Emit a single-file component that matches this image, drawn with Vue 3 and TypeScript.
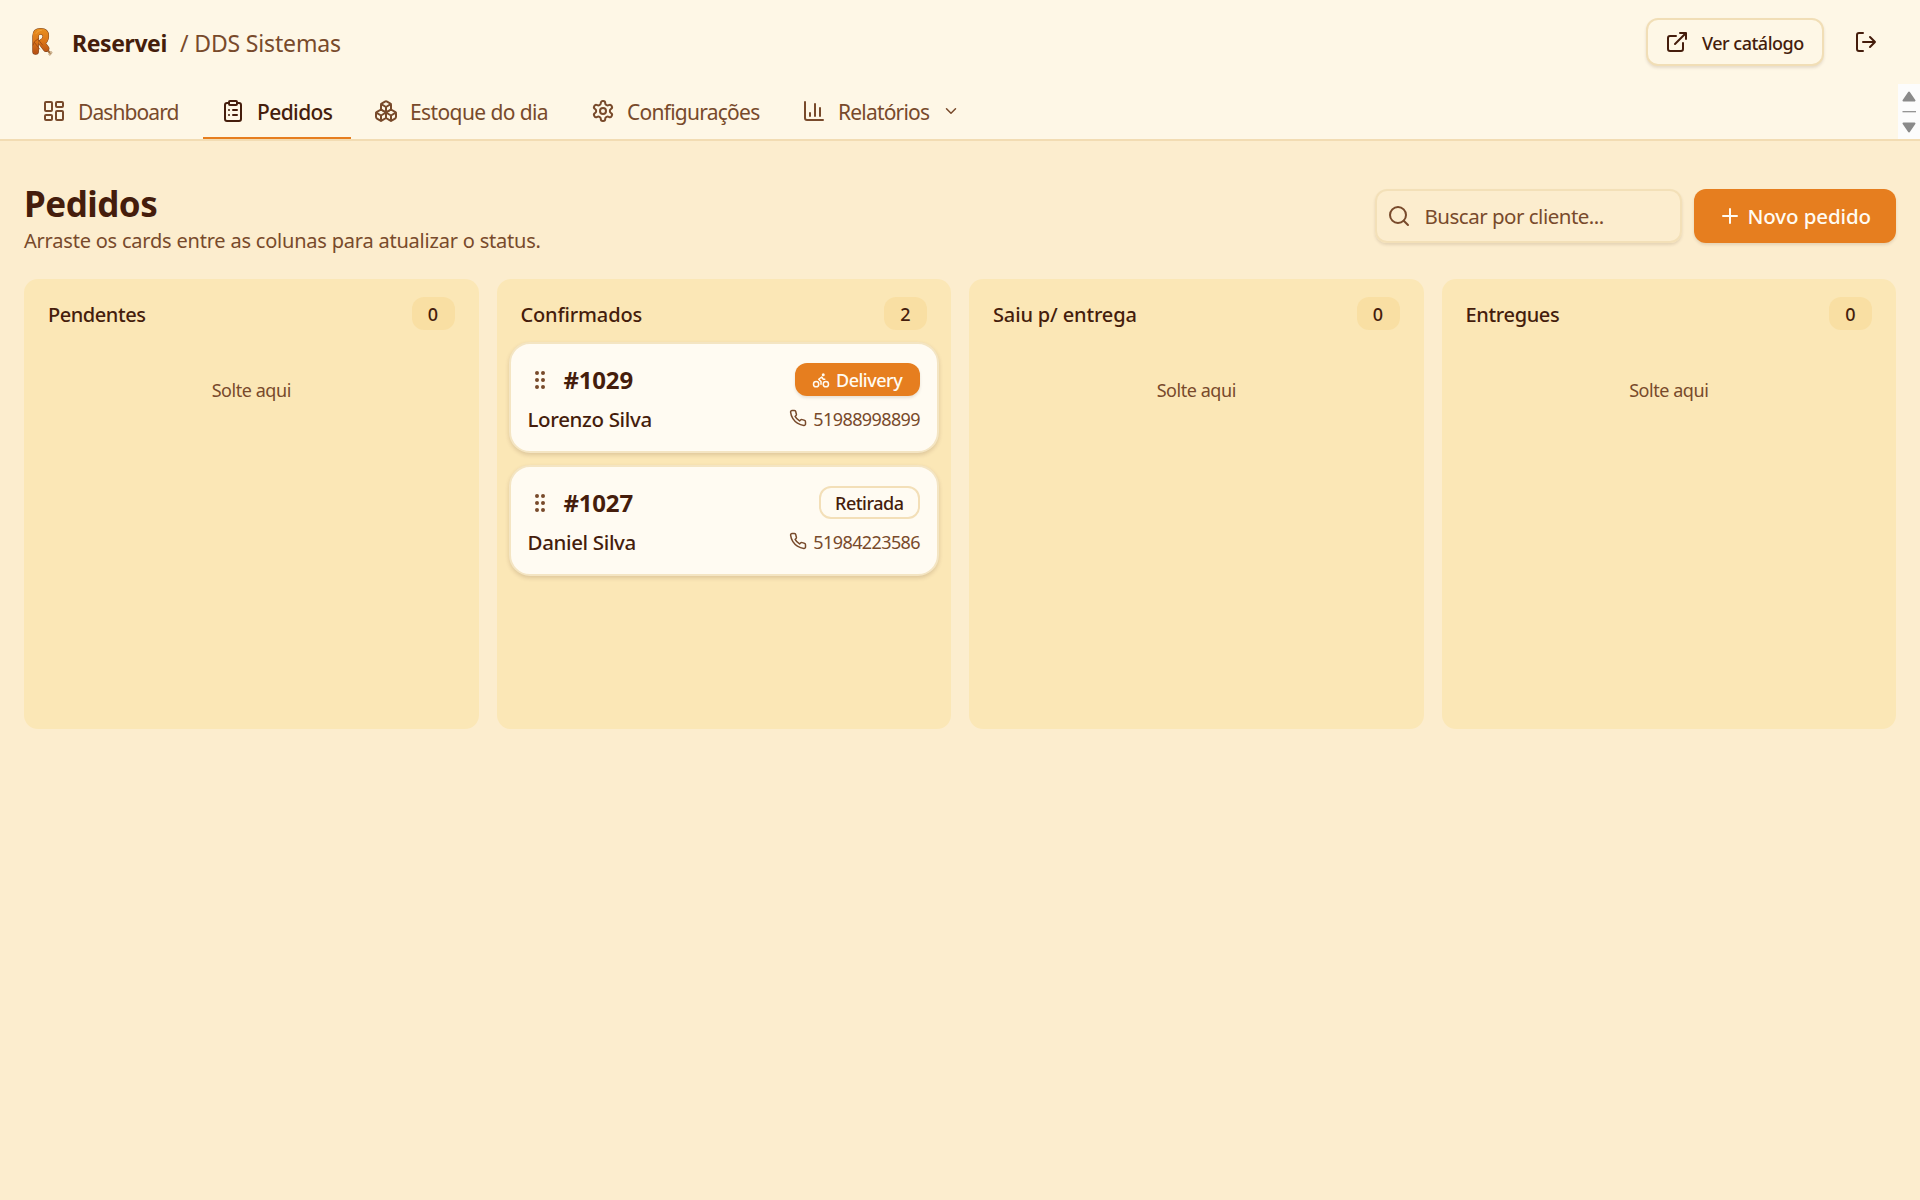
<script setup lang="ts">
interface Order {
  id: number
  customer: string
  phone: string
  delivery: boolean
}

interface Column {
  key: string
  title: string
  orders: Order[]
}

const columns: Column[] = [
  { key: 'pending', title: 'Pendentes', orders: [] },
  {
    key: 'confirmed',
    title: 'Confirmados',
    orders: [
      { id: 1029, customer: 'Lorenzo Silva', phone: '51988998899', delivery: true },
      { id: 1027, customer: 'Daniel Silva', phone: '51984223586', delivery: false },
    ],
  },
  { key: 'shipped', title: 'Saiu p/ entrega', orders: [] },
  { key: 'delivered', title: 'Entregues', orders: [] },
]
</script>

<template>
  <div class="page">
    <header class="header">
      <div class="topbar">
        <div class="brand">
          <svg class="logo" viewBox="0 0 24 30">
            <defs>
              <linearGradient id="sausage" gradientUnits="userSpaceOnUse" x1="0" y1="1" x2="0" y2="28">
                <stop offset="0" stop-color="#e8901f" />
                <stop offset="0.5" stop-color="#dc7619" />
                <stop offset="1" stop-color="#b04a12" />
              </linearGradient>
            </defs>
            <path d="M16.500 22l3.500 4" stroke="#a8703c" stroke-width="2" stroke-linecap="round" />
            <circle cx="21" cy="25.600" r="1" fill="#f3dfbd" stroke="#a07a50" stroke-width=".6" />
            <circle cx="19.800" cy="27.200" r="1" fill="#f3dfbd" stroke="#a07a50" stroke-width=".6" />
            <g fill="none" stroke-linecap="round" stroke-linejoin="round">
              <path d="M5.600 24.500V9Q5.600 4.400 10.700 4.400 15.800 4.400 15.800 9.200 15.800 13.500 11.500 15.500L16 21.500" stroke="#7c4420" stroke-width="6.600" />
              <path d="M5.600 24.500V9Q5.600 4.400 10.700 4.400 15.800 4.400 15.800 9.200 15.800 13.500 11.500 15.500L16 21.500" stroke="url(#sausage)" stroke-width="5.600" />
              <path d="M8.500 11.500Q3 14.500 3 18M4.500 15.500l5 6.500M9 13.500l3.500 4.500" stroke="#a04a12" stroke-width=".9" />
              <path d="M6 6.500Q7.500 3.200 11.500 3.200" stroke="#f0a23c" stroke-width="1" />
            </g>
          </svg>
          <span class="brand-name">Reservei</span>
          <span class="tenant">/ DDS Sistemas</span>
        </div>
        <div class="actions">
          <button class="catalog">
            <svg class="icon" viewBox="0 0 24 24"><path d="M15 3h6v6M10 14 21 3M18 13v6a2 2 0 0 1-2 2H5a2 2 0 0 1-2-2V8a2 2 0 0 1 2-2h6" /></svg>
            <span>Ver catálogo</span>
          </button>
          <button class="logout" aria-label="Sair">
            <svg class="icon" viewBox="0 0 24 24"><path d="m16 17 5-5-5-5M21 12H9M9 21H5a2 2 0 0 1-2-2V5a2 2 0 0 1 2-2h4" /></svg>
          </button>
        </div>
      </div>

      <div class="navbar">
        <nav class="tabs">
          <a class="tab">
            <svg class="icon" viewBox="0 0 24 24">
              <rect width="7" height="9" x="3" y="3" rx="1" /><rect width="7" height="5" x="14" y="3" rx="1" />
              <rect width="7" height="9" x="14" y="12" rx="1" /><rect width="7" height="5" x="3" y="16" rx="1" />
            </svg>
            <span class="t-dash">Dashboard</span>
          </a>
          <a class="tab active">
            <svg class="icon" viewBox="0 0 24 24">
              <rect width="8" height="4" x="8" y="2" rx="1" />
              <path d="M16 4h2a2 2 0 0 1 2 2v14a2 2 0 0 1-2 2H6a2 2 0 0 1-2-2V6a2 2 0 0 1 2-2h2M12 11h4M12 16h4M8 11h.01M8 16h.01" />
            </svg>
            <span class="t-ped">Pedidos</span>
          </a>
          <a class="tab">
            <svg class="icon" viewBox="0 0 24 24">
              <path d="M2.970 12.920A2 2 0 0 0 2 14.630v3.240a2 2 0 0 0 .970 1.710l3 1.800a2 2 0 0 0 2.060 0L12 19v-5.500l-5-3-4.030 2.420Z" />
              <path d="m7 16.500-4.740-2.850M7 16.500l5-3M7 16.500v5.170" />
              <path d="M12 13.500V19l3.970 2.380a2 2 0 0 0 2.060 0l3-1.800a2 2 0 0 0 .970-1.710v-3.240a2 2 0 0 0-.970-1.710L17 10.500l-5 3Z" />
              <path d="m17 16.500-5-3M17 16.500l4.740-2.850M17 16.500v5.170" />
              <path d="M7.970 4.420A2 2 0 0 0 7 6.130v4.370l5 3 5-3V6.130a2 2 0 0 0-.970-1.710l-3-1.800a2 2 0 0 0-2.060 0l-3 1.800Z" />
              <path d="M12 8 7.260 5.150M12 8l4.740-2.850M12 13.500V8" />
            </svg>
            <span class="t-est">Estoque do dia</span>
          </a>
          <a class="tab">
            <svg class="icon" viewBox="0 0 24 24">
              <path d="M12.220 2h-.440a2 2 0 0 0-2 2v.180a2 2 0 0 1-1 1.730l-.430.250a2 2 0 0 1-2 0l-.150-.080a2 2 0 0 0-2.730.730l-.220.380a2 2 0 0 0 .730 2.730l.150.100a2 2 0 0 1 1 1.720v.510a2 2 0 0 1-1 1.740l-.150.090a2 2 0 0 0-.730 2.730l.220.380a2 2 0 0 0 2.730.730l.150-.080a2 2 0 0 1 2 0l.430.250a2 2 0 0 1 1 1.730V20a2 2 0 0 0 2 2h.440a2 2 0 0 0 2-2v-.180a2 2 0 0 1 1-1.730l.430-.250a2 2 0 0 1 2 0l.150.080a2 2 0 0 0 2.730-.730l.220-.390a2 2 0 0 0-.730-2.730l-.150-.080a2 2 0 0 1-1-1.740v-.500a2 2 0 0 1 1-1.740l.150-.090a2 2 0 0 0 .730-2.730l-.220-.380a2 2 0 0 0-2.730-.730l-.150.080a2 2 0 0 1-2 0l-.430-.250a2 2 0 0 1-1-1.730V4a2 2 0 0 0-2-2z" />
              <circle cx="12" cy="12" r="3" />
            </svg>
            <span class="t-conf">Configurações</span>
          </a>
          <a class="tab">
            <svg class="icon" viewBox="0 0 24 24"><path d="M3 3v16a2 2 0 0 0 2 2h16M8 17v-3M13 17V5M18 17V9" /></svg>
            <span class="t-rel">Relatórios</span>
            <svg class="icon chevron" viewBox="0 0 24 24"><path d="m6 9 6 6 6-6" /></svg>
          </a>
        </nav>
        <div class="scroller">
          <svg viewBox="0 0 22 55">
            <path d="M5.500 16.500 11 8.500l5.500 8zM5.500 39.500l5.500 8 5.500-8z" fill="#8a8a8a" stroke="#8a8a8a" stroke-width="2" stroke-linejoin="round" />
            <path d="M4.500 27.700h13.500" stroke="#8a8a8a" stroke-width="1.200" />
          </svg>
        </div>
      </div>
    </header>

    <main class="main">
      <div class="heading">
        <div class="heading-text">
          <h1>Pedidos</h1>
          <p>Arraste os cards entre as colunas para atualizar o status.</p>
        </div>
        <div class="tools">
          <div class="search">
            <svg class="icon" viewBox="0 0 24 24"><circle cx="11" cy="11" r="8" /><path d="m21 21-4.300-4.300" /></svg>
            <span>Buscar por cliente...</span>
          </div>
          <button class="new-order">
            <svg class="icon" viewBox="0 0 24 24"><path d="M5 12h14M12 5v14" /></svg>
            <span>Novo pedido</span>
          </button>
        </div>
      </div>

      <div class="board">
        <section v-for="col in columns" :key="col.key" class="column" :class="col.key">
          <div class="column-head">
            <h2>{{ col.title }}</h2>
            <span class="count">{{ col.orders.length }}</span>
          </div>
          <div v-if="col.orders.length" class="cards">
            <article v-for="o in col.orders" :key="o.id" class="card">
              <div class="row">
                <div class="order-id">
                  <svg class="icon grip" viewBox="0 0 24 24">
                    <circle cx="9" cy="5" r="1" /><circle cx="9" cy="12" r="1" /><circle cx="9" cy="19" r="1" />
                    <circle cx="15" cy="5" r="1" /><circle cx="15" cy="12" r="1" /><circle cx="15" cy="19" r="1" />
                  </svg>
                  <strong>#{{ o.id }}</strong>
                </div>
                <span v-if="o.delivery" class="badge filled">
                  <svg class="icon" viewBox="0 0 24 24">
                    <circle cx="18.500" cy="17.500" r="3.500" /><circle cx="5.500" cy="17.500" r="3.500" /><circle cx="15" cy="5" r="1" />
                    <path d="M12 17.500V14l-3-3 4-3 2 3h2" />
                  </svg>
                  <span>Delivery</span>
                </span>
                <span v-else class="badge outline"><span>Retirada</span></span>
              </div>
              <div class="row second">
                <span class="customer">{{ o.customer }}</span>
                <span class="phone">
                  <svg class="icon" viewBox="0 0 24 24"><path d="M22 16.920v3a2 2 0 0 1-2.180 2 19.790 19.790 0 0 1-8.630-3.070 19.500 19.500 0 0 1-6-6 19.790 19.790 0 0 1-3.070-8.670A2 2 0 0 1 4.110 2h3a2 2 0 0 1 2 1.720 12.840 12.840 0 0 0 .700 2.810 2 2 0 0 1-.450 2.110L8.090 9.910a16 16 0 0 0 6 6l1.270-1.270a2 2 0 0 1 2.110-.450 12.840 12.840 0 0 0 2.810.700A2 2 0 0 1 22 16.920z" /></svg>
                  <span>{{ o.phone }}</span>
                </span>
              </div>
            </article>
          </div>
          <div v-else class="empty">Solte aqui</div>
        </section>
      </div>
    </main>
  </div>
</template>

<style>
body {
  background: #fcedce;
}
</style>

<style scoped>
.page,
.page * {
  box-sizing: border-box;
}
.page {
  min-height: 1200px;
  background: #fcedce;
  color: #451d0c;
  font-family: 'Noto Sans', 'Open Sans', sans-serif;
  font-size: 20px;
  white-space: nowrap;
}
button {
  font-family: inherit;
  color: inherit;
  margin: 0;
}
h1,
h2,
p {
  margin: 0;
}
.icon {
  width: 24px;
  height: 24px;
  flex: none;
  fill: none;
  stroke: currentColor;
  stroke-width: 2;
  stroke-linecap: round;
  stroke-linejoin: round;
}
.header {
  height: 141px;
  background: #fef7e6;
  border-bottom: 2px solid #f2dcb3;
}
.topbar {
  height: 84px;
  padding: 0 24px;
  display: flex;
  align-items: center;
  justify-content: space-between;
}
.brand {
  display: flex;
  align-items: center;
  line-height: 30px;
}
.logo {
  width: 24px;
  height: 30px;
  margin-left: 6px;
}
.brand-name {
  margin-left: 18px;
  padding-top: 2px;
  width: 108px;
  font-size: 23px;
  font-weight: 700;
  letter-spacing: -0.4px;
}
.tenant {
  padding-top: 2px;
  font-size: 23px;
  letter-spacing: -0.15px;
  color: #784a2b;
}
.actions {
  display: flex;
  align-items: center;
}
.catalog {
  width: 178px;
  height: 48px;
  display: flex;
  align-items: center;
  gap: 13px;
  padding: 0 0 0 17px;
  border: 2px solid #f1deb6;
  border-radius: 12px;
  background: #fef7e6;
  box-shadow: 0 2px 3px rgba(69, 29, 12, 0.12);
  font-size: 18px;
  font-weight: 550;
  letter-spacing: -0.5px;
}
.catalog span {
  padding-top: 1px;
}
.logout {
  display: flex;
  padding: 0;
  border: 0;
  background: none;
  margin: 0 18px 0 30px;
}
.navbar {
  height: 55px;
  display: flex;
  justify-content: space-between;
  padding-left: 24px;
}
.tabs {
  display: flex;
  gap: 5px;
}
.tab {
  display: flex;
  align-items: center;
  padding: 0 18px 0;
  gap: 12px;
  color: #784a2b;
  font-size: 21px;
  border-bottom: 2px solid transparent;
}
.tab span {
  padding-top: 2px;
}
.tab.active {
  color: #451d0c;
  font-weight: 550;
  border-bottom-color: #e67e1f;
}
.t-dash {
  width: 102px;
  letter-spacing: -0.9px;
}
.t-ped {
  width: 76px;
  letter-spacing: -0.6px;
}
.t-est {
  width: 140px;
  letter-spacing: -0.6px;
}
.t-conf {
  width: 134px;
  letter-spacing: -0.75px;
}
.t-rel {
  width: 92px;
  letter-spacing: -0.8px;
}
.chevron {
  width: 18px;
  height: 18px;
}
.scroller {
  width: 22px;
  background: #fcfcfc;
}
.scroller svg {
  display: block;
  width: 22px;
  height: 55px;
}
.main {
  padding: 48px 24px 0;
}
.heading {
  display: flex;
  justify-content: space-between;
  height: 90px;
}
h1 {
  font-size: 35px;
  line-height: 30px;
  font-weight: 700;
  letter-spacing: -0.5px;
}
.heading-text p {
  margin-top: 7px;
  line-height: 30px;
  letter-spacing: -0.21px;
  color: #784a2b;
}
.tools {
  display: flex;
  gap: 12px;
}
.search {
  width: 307px;
  height: 54px;
  display: flex;
  align-items: center;
  padding-left: 10px;
  gap: 14px;
  border: 2px solid #f3e0b8;
  border-radius: 12px;
  box-shadow: 0 2px 3px rgba(69, 29, 12, 0.12);
  color: #784a2b;
  font-size: 20.5px;
  letter-spacing: -0.5px;
}
.new-order {
  width: 202.5px;
  height: 54px;
  display: flex;
  align-items: center;
  padding: 0 0 0 24px;
  gap: 6px;
  border: 0;
  border-radius: 12px;
  background: #e67e1f;
  color: #fffbf2;
  box-shadow: 0 2px 3px rgba(69, 29, 12, 0.12);
  font-size: 20.5px;
  font-weight: 550;
  letter-spacing: -0.1px;
}
.board {
  display: grid;
  grid-template-columns: repeat(4, 1fr);
  gap: 18px;
}
.column {
  height: 450px;
  border-radius: 14px;
  background: #fbe7b6;
  padding: 18px 12px 0;
}
.column-head {
  height: 33px;
  display: flex;
  align-items: center;
  justify-content: space-between;
  padding: 0 12px;
}
h2 {
  padding-top: 2px;
  font-size: 20px;
  line-height: 30px;
  font-weight: 550;
  letter-spacing: -0.15px;
}
.pending h2 {
  letter-spacing: -0.45px;
}
.delivered h2 {
  letter-spacing: -0.35px;
}
.count {
  width: 43px;
  height: 33px;
  border-radius: 12px;
  background: #f9dfa3;
  font-size: 18px;
  font-weight: 550;
  line-height: 34px;
  text-align: center;
}
.empty {
  margin-top: 45px;
  line-height: 30px;
  text-align: center;
  font-size: 18px;
  letter-spacing: -0.45px;
  color: #784a2b;
}
.cards {
  display: grid;
  gap: 12px;
  margin: 12px 0 0;
}
.card {
  height: 111px;
  padding: 19px 17px 0;
  border: 2px solid #f4e5c3;
  border-radius: 21px;
  background: #fffbf2;
  box-shadow: 0 2px 4px rgba(69, 29, 12, 0.16);
}
.row {
  display: flex;
  align-items: center;
  justify-content: space-between;
  height: 33px;
}
.row.second {
  margin-top: 7px;
  height: 30px;
}
.order-id {
  display: flex;
  align-items: center;
}
.grip {
  color: #784a2b;
}
strong {
  margin-left: 12px;
  padding-top: 1px;
  font-size: 24px;
  line-height: 30px;
  letter-spacing: -0.2px;
}
.badge {
  height: 33px;
  display: flex;
  align-items: center;
  border-radius: 12px;
  font-size: 18px;
  font-weight: 550;
  letter-spacing: -0.5px;
}
.badge span {
  padding-top: 1px;
}
.filled {
  width: 125px;
  gap: 6px;
  padding-left: 17px;
  background: #e67e1f;
  color: #fffbf2;
  box-shadow: 0 2px 3px rgba(69, 29, 12, 0.12);
}
.filled .icon,
.phone .icon {
  width: 18px;
  height: 18px;
}
.outline {
  width: 101px;
  padding-left: 14px;
  border: 2px solid #f3dfb8;
}
.customer {
  padding-top: 1px;
  font-size: 20.5px;
  font-weight: 550;
  letter-spacing: -0.35px;
}
.phone {
  display: flex;
  align-items: center;
  gap: 6px;
  color: #784a2b;
  font-size: 18px;
  letter-spacing: -0.6px;
}
.phone span {
  padding-top: 1px;
}
</style>
